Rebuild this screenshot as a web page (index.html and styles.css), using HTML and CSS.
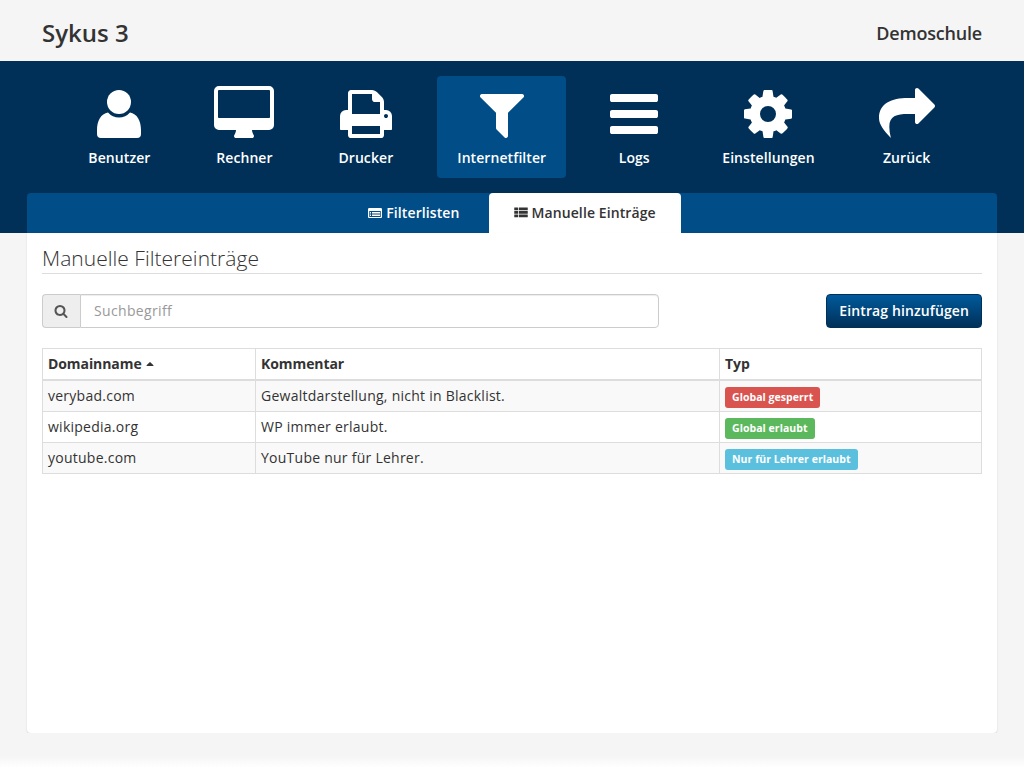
FILE: index.html
```html
<!doctype html>
<html lang="de">
	<head>
		<meta charset="utf-8">
		<title>Sykus 3</title>
		<link rel="stylesheet" href="styles.css">
	</head>
	<body>
		<header class="topbar">
			<div class="brand">Sykus 3</div>
			<div class="school">Demoschule</div>
		</header>

		<div class="band">
			<nav class="mainnav">
				<a class="navitem" href="#">
					<svg class="bigicon w44" viewBox="0 0 44 56"><circle cx="22" cy="16" r="12"/><path d="M11 26.5a14.500 14.500 0 0 0 22 0C40 27.500 44 35 44 44v4q0 4-4 4H4q-4 0-4-4v-4C0 35 4 27.500 11 26.500z"/></svg>
					Benutzer
				</a>
				<a class="navitem" href="#">
					<svg class="bigicon w60" viewBox="0 0 1920 1792"><path d="M1792 992v-832q0-13-9.500-22.500t-22.500-9.500h-1600q-13 0-22.500 9.500t-9.500 22.500v832q0 13 9.500 22.500t22.500 9.500h1600q13 0 22.500-9.500t9.500-22.500zm128-832v1088q0 66-47 113t-113 47h-544q0 37 16 77.500t32 71 16 43.500q0 26-19 45t-45 19h-512q-26 0-45-19t-19-45q0-14 16-44t32-70 16-78h-544q-66 0-113-47t-47-113v-1088q0-66 47-113t113-47h1600q66 0 113 47t47 113z"/></svg>
					Rechner
				</a>
				<a class="navitem" href="#">
					<svg class="bigicon w52" viewBox="64 0 1664 1792"><path d="M448 1536h896v-256h-896v256zm0-640h896v-384h-160q-40 0-68-28t-28-68v-160h-640v640zm1152 64q0-26-19-45t-45-19-45 19-19 45 19 45 45 19 45-19 19-45zm128 0v416q0 13-9.500 22.500t-22.500 9.500h-224v160q0 40-28 68t-68 28h-960q-40 0-68-28t-28-68v-160h-224q-13 0-22.500-9.500t-9.500-22.500v-416q0-79 56.500-135.500t135.500-56.500h64v-544q0-40 28-68t68-28h672q40 0 88 20t76 48l152 152q28 28 48 76t20 88v256h64q79 0 135.500 56.500t56.500 135.500z"/></svg>
					Drucker
				</a>
				<a class="navitem active" href="#">
					<svg class="bigicon w44" viewBox="192 0 1408 1792"><path d="M1595 295q17 41-14 70l-493 493v742q0 42-39 59-13 5-25 5-27 0-45-19l-256-256q-19-19-19-45v-486l-493-493q-31-29-14-70 17-39 59-39h1280q42 0 59 39z"/></svg>
					Internetfilter
				</a>
				<a class="navitem" href="#">
					<svg class="bigicon w48" viewBox="128 0 1536 1792"><path d="M1664 1344v128q0 26-19 45t-45 19h-1408q-26 0-45-19t-19-45v-128q0-26 19-45t45-19h1408q26 0 45 19t19 45zm0-512v128q0 26-19 45t-45 19h-1408q-26 0-45-19t-19-45v-128q0-26 19-45t45-19h1408q26 0 45 19t19 45zm0-512v128q0 26-19 45t-45 19h-1408q-26 0-45-19t-19-45v-128q0-26 19-45t45-19h1408q26 0 45 19t19 45z"/></svg>
					Logs
				</a>
				<a class="navitem" href="#">
					<svg class="bigicon w48" viewBox="128 0 1536 1792"><path d="M1152 896q0-106-75-181t-181-75-181 75-75 181 75 181 181 75 181-75 75-181zm512-109v222q0 12-8 23t-20 13l-185 28q-19 54-39 91 35 50 107 138 10 12 10 25t-9 23q-27 37-99 108t-94 71q-12 0-26-9l-138-108q-44 23-91 38-16 136-29 186-7 28-36 28h-222q-14 0-24.500-8.500t-11.500-21.500l-28-184q-49-16-90-37l-141 107q-10 9-25 9-14 0-25-11-126-114-165-168-7-10-7-23 0-12 8-23 15-21 51-66.500t54-70.500q-27-50-41-99l-183-27q-13-2-21-12.500t-8-23.500v-222q0-12 8-23t19-13l186-28q14-46 39-92-40-57-107-138-10-12-10-24 0-10 9-23 26-36 98.500-107.500t94.500-71.500q13 0 26 10l138 107q44-23 91-38 16-136 29-186 7-28 36-28h222q14 0 24.500 8.500t11.500 21.500l28 184q49 16 90 37l142-107q9-9 24-9 13 0 25 10 129 119 165 170 7 8 7 22 0 12-8 23-15 21-51 66.500t-54 70.500q26 50 41 98l183 28q13 2 21 12.500t8 23.500z"/></svg>
					Einstellungen
				</a>
				<a class="navitem" href="#">
					<svg class="bigicon w56" viewBox="0 0 1792 1792"><path d="M1792 640q0 26-19 45l-512 512q-19 19-45 19t-45-19-19-45v-256h-224C560 896 330 960 330 1300q0 170 50 364C160 1430 0 1240 0 1024 0 560 400 384 928 384h224v-256q0-26 19-45t45-19 45 19l512 512q19 19 19 45z"/></svg>
					Zurück
				</a>
			</nav>

			<div class="tabs">
				<a class="tab" href="#">
					<svg class="smallicon" viewBox="0 0 1792 1792"><path fill-rule="evenodd" d="M160 256h1472q66 0 113 47t47 113v960q0 66-47 113t-113 47h-1472q-66 0-113-47t-47-113v-960q0-66 47-113t113-47zM160 640v736q0 13 9 23t23 9h1408q13 0 23-9t9-23v-736zM256 768h128v128h-128zM512 768h1024v128h-1024zM256 960h128v128h-128zM512 960h1024v128h-1024zM256 1152h128v128h-128zM512 1152h1024v128h-1024z"/></svg>
					Filterlisten
				</a>
				<a class="tab active" href="#">
					<svg class="smallicon" viewBox="0 0 1792 1792"><path d="M64 192h416q32 0 32 32v288q0 32-32 32h-416q-32 0-32-32v-288q0-32 32-32zM64 640h416q32 0 32 32v288q0 32-32 32h-416q-32 0-32-32v-288q0-32 32-32zM64 1088h416q32 0 32 32v288q0 32-32 32h-416q-32 0-32-32v-288q0-32 32-32zM640 192h1088q32 0 32 32v288q0 32-32 32h-1088q-32 0-32-32v-288q0-32 32-32zM640 640h1088q32 0 32 32v288q0 32-32 32h-1088q-32 0-32-32v-288q0-32 32-32zM640 1088h1088q32 0 32 32v288q0 32-32 32h-1088q-32 0-32-32v-288q0-32 32-32z"/></svg>
					Manuelle Einträge
				</a>
			</div>
		</div>

		<main class="panel">
			<h2 class="panel-title">Manuelle Filtereinträge</h2>

			<div class="toolbar">
				<div class="searchgroup">
					<span class="searchaddon">
						<svg class="smallicon" viewBox="0 0 1792 1792"><path d="M1216 832q0-185-131.500-316.500t-316.500-131.500-316.500 131.500-131.500 316.500 131.500 316.500 316.500 131.500 316.500-131.500 131.500-316.500zm512 832q0 52-38 90t-90 38q-54 0-90-38l-343-342q-179 124-399 124-143 0-273.500-55.500t-225-150-150-225-55.500-273.500 55.500-273.500 150-225 225-150 273.500-55.500 273.500 55.500 225 150 150 225 55.500 273.500q0 220-124 399l343 343q37 37 37 90z"/></svg>
					</span>
					<input class="searchinput" type="text" placeholder="Suchbegriff">
				</div>
				<button class="addbtn" type="button">Eintrag hinzufügen</button>
			</div>

			<table class="entries">
				<thead>
					<tr>
						<th class="col-domain">Domainname <svg class="sorticon" viewBox="320 192 1152 576"><path d="M1408 704q0 26-19 45t-45 19h-896q-26 0-45-19t-19-45 19-45l448-448q19-19 45-19t45 19l448 448q19 19 19 45z"/></svg></th>
						<th class="col-comment">Kommentar</th>
						<th>Typ</th>
					</tr>
				</thead>
				<tbody>
					<tr>
						<td>verybad.com</td>
						<td>Gewaltdarstellung, nicht in Blacklist.</td>
						<td><span class="label red">Global gesperrt</span></td>
					</tr>
					<tr>
						<td>wikipedia.org</td>
						<td>WP immer erlaubt.</td>
						<td><span class="label green">Global erlaubt</span></td>
					</tr>
					<tr>
						<td>youtube.com</td>
						<td>YouTube nur für Lehrer.</td>
						<td><span class="label blue">Nur für Lehrer erlaubt</span></td>
					</tr>
				</tbody>
			</table>
		</main>

		<footer class="pagefoot"></footer>
	</body>
</html>
```

FILE: styles.css
```css
html, body {
	height: 100%;
}

body {
	margin: 0;
	display: flex;
	flex-direction: column;
	font-family: "Open Sans", sans-serif;
	font-size: 14px;
	line-height: 20px;
	color: #333;
	background: #f5f5f5;
}

a {
	text-decoration: none;
}

/* top bar */
.topbar {
	height: 61px;
	flex: none;
	display: flex;
	align-items: center;
	justify-content: space-between;
	padding: 4px 42px 0;
	box-sizing: border-box;
	font-weight: 600;
}

.brand { font-size: 24px; }
.school { font-size: 18px; letter-spacing: -.2px; }

/* dark band with the main navigation */
.band {
	flex: none;
	background: #003058;
	padding-top: 15px;
}

.mainnav {
	display: flex;
	justify-content: center;
	gap: 24px;
	padding-right: 1px;
}

.navitem {
	display: flex;
	flex-direction: column;
	align-items: center;
	padding: 10px 20px;
	border-radius: 4px;
	color: #fff;
	font-weight: 600;
	letter-spacing: .08px;
}

.navitem.active { background: #004d87; }

.bigicon {
	height: 56px;
	margin-bottom: 6px;
	fill: #fff;
}

.w44 { width: 44px; }
.w48 { width: 48px; }
.w52 { width: 52px; }
.w56 { width: 56px; }
.w60 { width: 60px; }

.tabs {
	height: 40px;
	margin: 15px 27px 0;
	display: flex;
	justify-content: center;
	gap: 4px;
	background: #004d87;
	border-radius: 4px 4px 0 0;
}

.tab {
	display: flex;
	align-items: center;
	gap: 4px;
	padding: 0 25px;
	border-radius: 4px 4px 0 0;
	color: #fff;
	font-weight: 600;
	letter-spacing: .1px;
}

.tab.active {
	background: #fff;
	color: #333;
}

.smallicon {
	width: 14px;
	height: 14px;
	fill: currentColor;
}

/* content */
.panel {
	flex: 1;
	margin: 0 27px;
	padding: 15px;
	background: #fff;
	border-radius: 0 0 4px 4px;
	box-shadow: 0 1px 2px rgba(0, 0, 0, .12);
}

.panel-title {
	margin: 0 0 20px;
	padding-bottom: 4px;
	border-bottom: 1px solid #ddd;
	font-size: 21px;
	line-height: 21px;
	font-weight: 300;
	letter-spacing: .03px;
}

.toolbar {
	display: flex;
	justify-content: space-between;
	margin-bottom: 20px;
}

.searchgroup {
	display: flex;
	width: 617px;
	height: 34px;
}

.searchaddon {
	width: 38px;
	display: flex;
	align-items: center;
	justify-content: center;
	flex: none;
	padding-right: 2px;
	box-sizing: border-box;
	color: #555;
	background: #eee;
	border: 1px solid #ccc;
	border-right: 0;
	border-radius: 4px 0 0 4px;
}

.searchinput {
	flex: 1;
	min-width: 0;
	padding: 6px 13px;
	font: inherit;
	letter-spacing: .35px;
	color: #555;
	border: 1px solid #ccc;
	border-radius: 0 4px 4px 0;
	box-shadow: inset 0 1px 1px rgba(0, 0, 0, .075);
	outline: none;
}

.searchinput::placeholder { color: #999; }

.addbtn {
	height: 34px;
	padding: 0 12px;
	font: inherit;
	font-weight: 600;
	letter-spacing: .11px;
	color: #fff;
	background: linear-gradient(#005a9c, #003058);
	border: 1px solid #003058;
	border-radius: 4px;
}

.entries {
	width: 100%;
	table-layout: fixed;
	border-collapse: collapse;
}

.entries th, .entries td {
	padding: 5px;
	border: 1px solid #ddd;
	text-align: left;
}

.entries td { letter-spacing: .25px; }

.entries th {
	font-weight: 700;
	letter-spacing: -.08px;
	border-bottom-width: 2px;
}

.col-domain { width: 202px; }
.col-comment { width: 453px; }

.entries tbody tr:nth-child(odd) { background: #f9f9f9; }

.sorticon {
	width: 8px;
	height: 4px;
	margin: 0 0 2px 1px;
	vertical-align: middle;
	fill: #333;
}

.entries td .label {
	display: inline-block;
	margin: 1px 0 -2px;
	padding: 2px 7px 3px;
	font-size: 10.5px;
	line-height: 16px;
	font-weight: 700;
	letter-spacing: .05px;
	color: #fff;
	border-radius: 3px;
	vertical-align: top;
}

.red { background: #d9534f; }
.green { background: #5cb85c; }
.blue { background: #5bc0de; }

.pagefoot {
	height: 35px;
	flex: none;
	background: linear-gradient(#f5f5f5 65%, #fff);
}
```
